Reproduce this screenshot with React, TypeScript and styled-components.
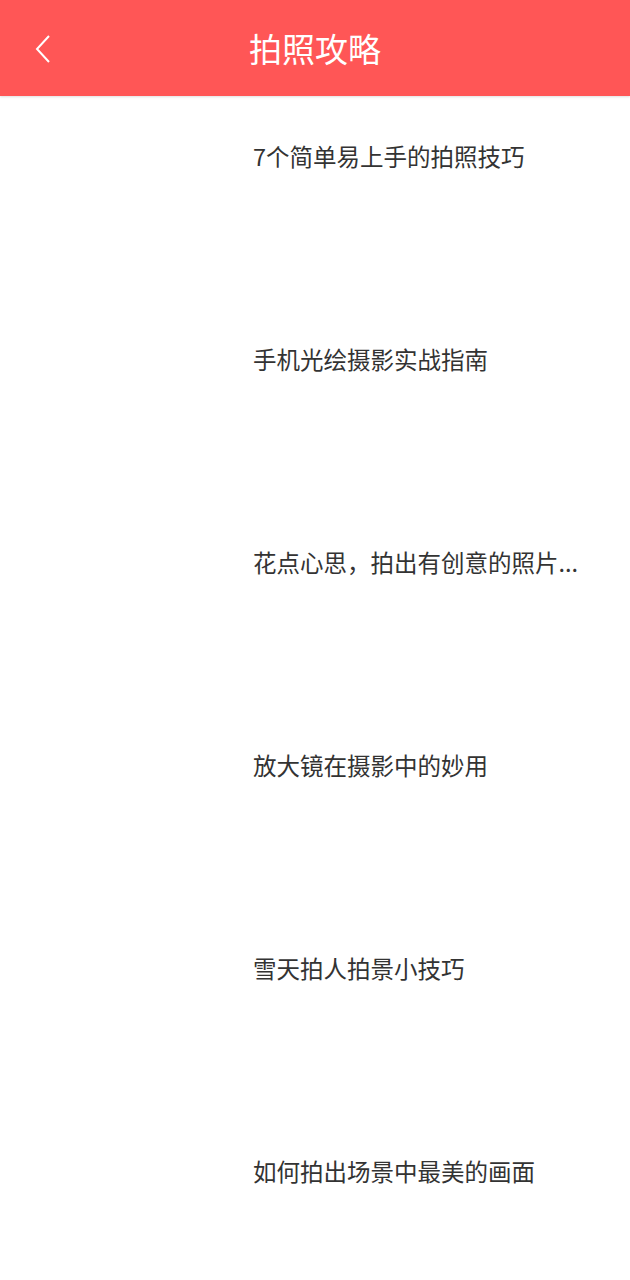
import React from "react";
import styled, { createGlobalStyle } from "styled-components";

const GlobalStyle = createGlobalStyle`
  html, body {
    margin: 0;
    padding: 0;
    background: #fff;
    font-family: "Noto Sans CJK SC", "Noto Sans", sans-serif;
  }
`;

const Page = styled.div`
  width: 630px;
  min-height: 1280px;
  background: #fff;
`;

const Header = styled.header`
  height: 96px;
  background: #ff5656;
  display: grid;
  grid-template-columns: 96px 1fr 96px;
  align-items: center;
  box-shadow: 0 1px 2px rgba(0, 0, 0, 0.12);
`;

const BackButton = styled.button`
  border: none;
  background: none;
  padding: 2px 0 0 32px;
  height: 96px;
  display: flex;
  align-items: center;
  cursor: pointer;
`;

const Title = styled.h1`
  margin: 0;
  text-align: center;
  color: #fff;
  font-size: 33px;
  font-weight: 400;
  line-height: 96px;
`;

const List = styled.ul`
  list-style: none;
  margin: 0;
  padding: 0;
`;

const Row = styled.li`
  height: 203px;
  display: grid;
  grid-template-columns: 253px 1fr;
  align-items: start;
`;

const Thumb = styled.div`
  height: 100%;
`;

const ItemTitle = styled.div`
  padding-top: 44px;
  font-size: 23.5px;
  line-height: 32px;
  color: #333;
  white-space: nowrap;
  overflow: hidden;
  max-width: 340px;
`;

const items = [
  "7个简单易上手的拍照技巧",
  "手机光绘摄影实战指南",
  "花点心思，拍出有创意的照片...",
  "放大镜在摄影中的妙用",
  "雪天拍人拍景小技巧",
  "如何拍出场景中最美的画面",
];

function ChevronLeft() {
  return (
    <svg width="22" height="30" viewBox="0 0 22 30">
      <path d="M17 2 L5 15 L17 28" fill="none" stroke="#fff" strokeWidth="2" />
    </svg>
  );
}

export default function App() {
  return (
    <Page>
      <GlobalStyle />
      <Header>
        <BackButton aria-label="back">
          <ChevronLeft />
        </BackButton>
        <Title>拍照攻略</Title>
        <div />
      </Header>
      <List>
        {items.map((t) => (
          <Row key={t}>
            <Thumb />
            <ItemTitle>{t}</ItemTitle>
          </Row>
        ))}
      </List>
    </Page>
  );
}
